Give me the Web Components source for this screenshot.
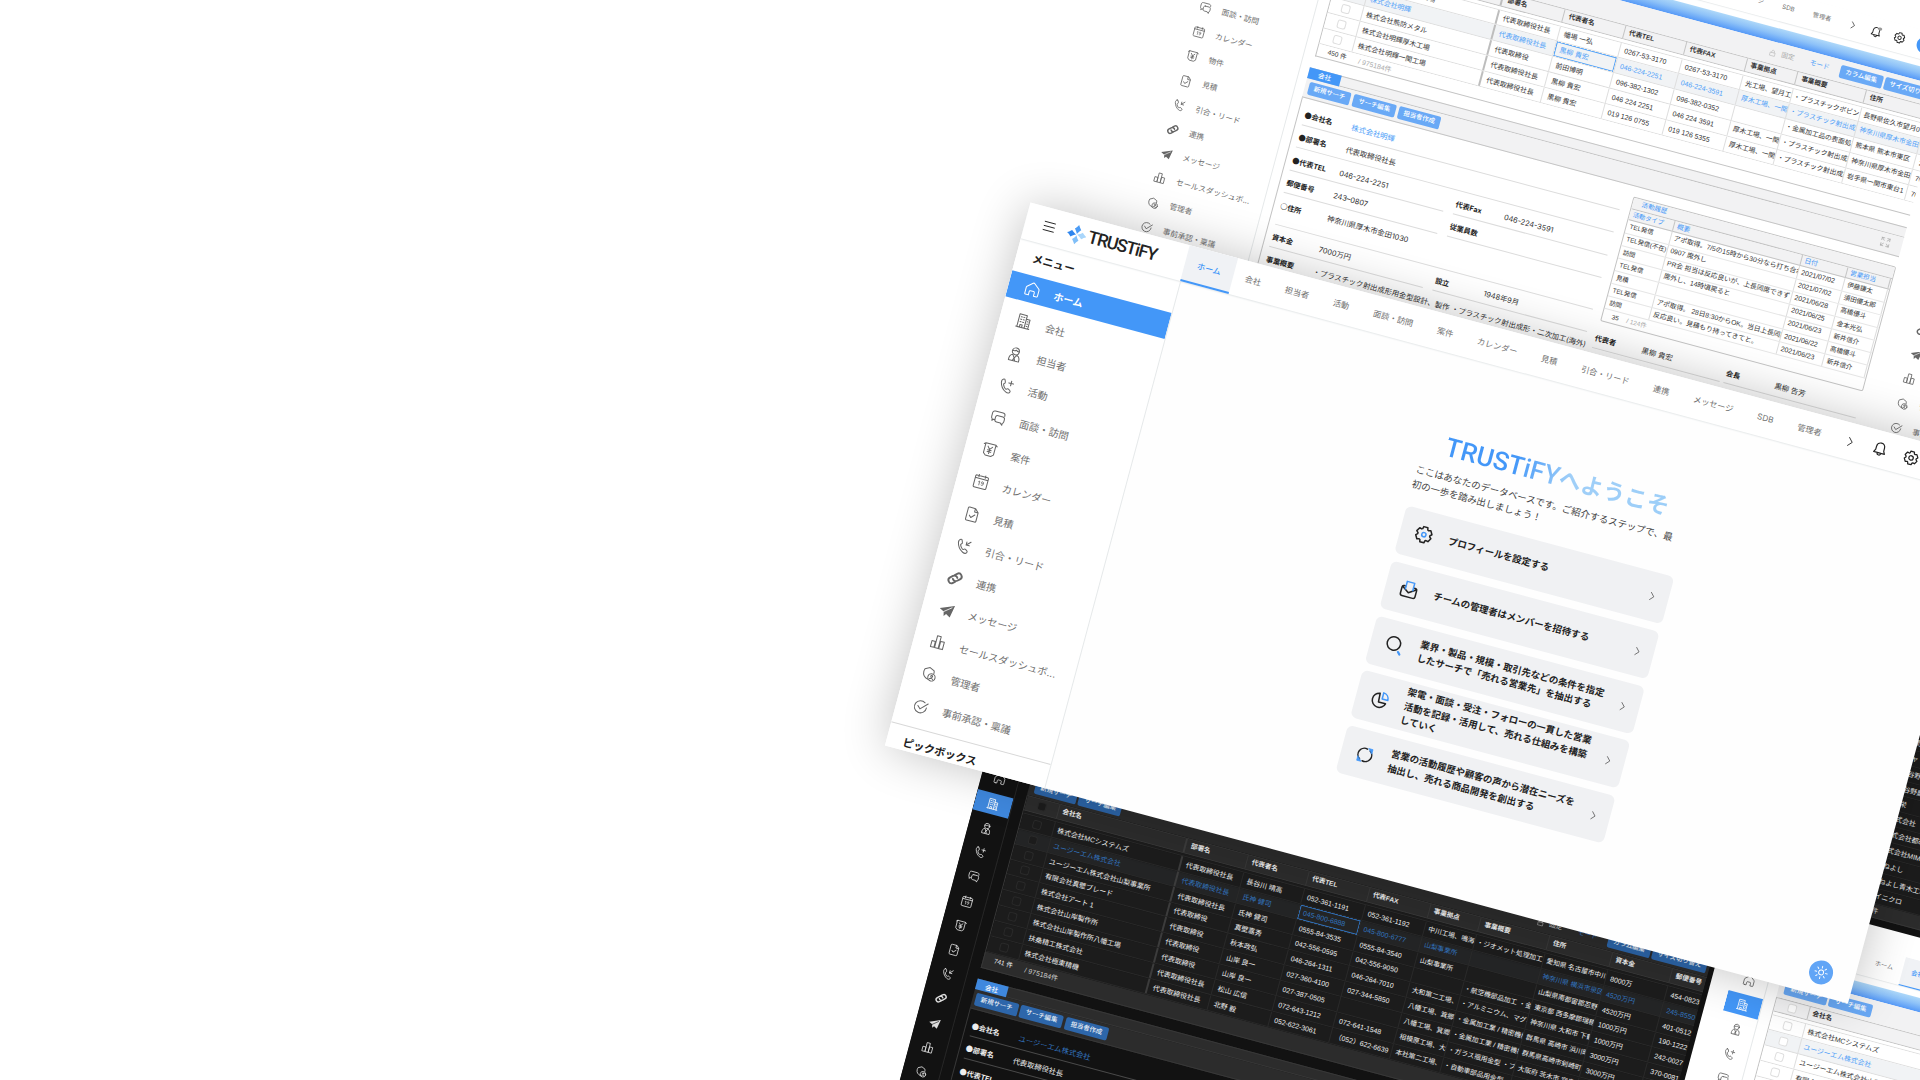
<!DOCTYPE html>
<html lang="ja">
<head>
<meta charset="utf-8">
<title>TRUSTiFY</title>
<style>
html,body{margin:0;padding:0;background:#fff}
body{width:1920px;height:1080px;overflow:hidden;position:relative;font-family:"Inter","Noto Sans CJK JP",sans-serif}
</style>
</head>
<body>
<tf-board></tf-board>
<script>
const s = n => `calc(var(--s) * ${n}px)`;
const define = (name, css, html) => {
  const make = el => {
    const t = document.createElement('template');
    t.innerHTML = `<style>*{box-sizing:border-box}${css}</style>${typeof html === 'function' ? html(el) : html}`;
    return t.content.cloneNode(true);
  };
  customElements.define(name, class extends HTMLElement {
    connectedCallback() {
      if (this.shadowRoot) return;
      this.attachShadow({ mode: 'open' }).append(make(this));
    }
  });
};

/* ---------- icons ---------- */
const gearPath = (cx, cy, ro, ri) => {
  let d = '';
  for (let k = 0; k < 6; k++) {
    [[-25, ri], [-15, ro], [15, ro], [25, ri]].forEach(([o, r], i) => {
      const a = (k * 60 + o - 90) * Math.PI / 180;
      d += `${k || i ? 'L' : 'M'}${(cx + r * Math.cos(a)).toFixed(2)} ${(cy + r * Math.sin(a)).toFixed(2)}`;
    });
  }
  return d + 'Z';
};
const handset = 'M3.2 1.3c-1.6.7-2 2.2-1.6 4.1.8 3.6 3.6 7.2 7 8.8 1.7.8 3.400.7 4.300-.7.5-.8.3-1.400-.4-1.900l-1.700-1.100c-.8-.5-1.400-.2-2 .5-.4.4-.9.4-1.400 0-1.300-1-2.300-2.300-2.900-3.800-.2-.5-.1-.9.4-1.200.8-.5 1.100-1.100.7-2l-.8-1.900c-.3-.8-.9-1.100-1.600-.8z';
const ICONS = {
  menu: '<path d="M1.500 2.800h13M1.500 8h13M1.500 13.200h13"/>',
  home: '<path d="M3 14.600H1.900a.9.9 0 0 1-.9-.9V7.200c0-.5.2-.9.500-1.200L7.100 1.300a1.400 1.400 0 0 1 1.800 0L14.500 6c.3.3.5.7.5 1.200v6.500a.9.900 0 0 1-.9.900h-3.300V10.800a1 1 0 0 0-1-1H6.200a1 1 0 0 0-1 1v3.800H3z"/>',
  building: '<path d="M.8 15h14.400M2 15V1.200h8V15M10 5h4v10M4.800 15v-2.800h2.400V15M4 3.800h1.200M6.800 3.800H8M4 6.500h1.200M6.800 6.500H8M4 9.200h1.200M6.800 9.200H8M11.700 7.500h.8M11.700 10h.8M11.700 12.500h.8"/>',
  person: '<circle cx="8" cy="4.800" r="3.700"/><path d="M4.400 4.600c2 .2 3.200-.3 4-1.200.7 1 1.800 1.300 3.200 1.200M2.500 15.200c-.3-3.500.8-5.800 3.200-6.500L8 12l2.300-3.300c2.400.7 3.500 3 3.200 6.500zM8 12l-1.200 3M8 12l1.200 3"/>',
  phoneplus: `<path d="${handset}"/><path d="M12 1.500v5M9.500 4h5"/>`,
  phonein: `<path d="${handset}"/><path d="M14.500 1.500 10.200 5.800M10.200 2.500v3.300h3.400"/>`,
  chat: '<path d="M5 10.500H3.800l-1.600 1.600v-1.900C1.400 9.700 1 9 1 8V4c0-1.500 1-2.500 2.500-2.500H12c1.500 0 2.500 1 2.500 2.500v.500"/><path d="M7.500 5.500h5.200c1.400 0 2.300.9 2.300 2.300v2.600c0 1-.4 1.700-1.200 2v2.100l-2-1.900H7.500c-1.400 0-2.300-.9-2.300-2.300V7.800c0-1.400.9-2.300 2.300-2.300z"/>',
  yen: '<path d="M2.500 1.500h11v10.800l-2.500 2.200H5L2.500 12.300zM.9 2.800l1.600-1.300M15.100 2.800l-1.600-1.300M5.500 4.500 8 7.500l2.500-3M8 7.500V12M6 8.300h4M6 10.200h4"/>',
  calendar: '<path d="M1 5V3.200C1 2.500 1.500 2 2.200 2h11.600c.7 0 1.200.5 1.200 1.200v10.600c0 .7-.5 1.200-1.200 1.200H2.200c-.7 0-1.200-.5-1.200-1.200zH15M4.500.8v2.400M11.500.8v2.400"/><path stroke-width=".8" d="M5.600 8.400l1-.8v4.200M9 11.400c1.600.8 2.200-.6 2-2.500-.1-.9-.6-1.300-1.200-1.300-.7 0-1.200.5-1.100 1.200.1 1.200 1.800 1.300 2.300.3"/>',
  doc: '<path d="M10 .9H3.600c-.8 0-1.300.5-1.300 1.300v11.600c0 .8.500 1.300 1.300 1.300h8.800c.8 0 1.300-.5 1.300-1.300V4.600zM9.800 1v3.700h3.800M5.300 9.300l2 2 3.600-3.600"/>',
  link: '<g stroke-width="2" transform="rotate(-42 8 8)"><path d="M6.600 11.300H3.800a3.300 3.300 0 0 1 0-6.600h3.400a3.300 3.300 0 0 1 3.200 4"/><path d="M9.400 4.700h2.800a3.300 3.300 0 0 1 0 6.600H8.800a3.300 3.300 0 0 1-3.200-4"/></g>',
  plane: '<path fill="currentColor" stroke="none" d="M15.600 1.200 13.200 14.600 8.600 12 6.500 14.700 5.400 10 .4 7.600z"/><path stroke="var(--win,#fff)" stroke-width=".8" d="M5.400 10.100 13 4"/>',
  bars: '<path d="M1.400 8h3.800v6.500H1.400zM5.900 1.500h4v13h-4zM10.600 6.500h4v8h-4z"/>',
  shield: '<path d="M8 13.800C4 13 1.500 10.500 1.500 6.800c0-1.200.2-2 .5-3L7 1.200l5 2.300c.4 1 .5 2 .5 3"/><circle cx="11" cy="11" r="3.900"/><circle cx="11" cy="9.900" r="1"/><path d="M9.200 13c.4-1.100 3.200-1.100 3.600 0"/>',
  check: '<path d="M14.300 7.500A6.500 6.500 0 1 1 11.500 2.600M4.800 7.300l3 3L15 3"/>',
  bell: '<path d="M8 1.200C5.300 1.200 3.600 3 3.600 5.800V9L2.100 11.900h11.800L12.400 9V5.800c0-2.800-1.700-4.600-4.400-4.600zM6 12c0 3 4 3 4 0"/>',
  gear: `<path d="${gearPath(8, 8, 7, 5.4)}"/><circle cx="8" cy="8" r="2.300"/>`,
  chev: '<path d="M5 1.500 11 8l-6 6.500"/>',
  expand: '<path d="M1.500 5.500v-4h4M1.500 1.500l4 4M10.500 1.500h4v4M14.500 1.500l-4 4M1.500 10.500v4h4M1.500 14.500l4-4M14.500 10.500v4h-4M14.500 14.500l-4-4"/>',
  lock: '<path d="M2.500 7.200h11v7.600h-11zM5 7V4.500a3 3 0 0 1 6 0V7"/>',
  sun: '<circle cx="8" cy="8" r="2.800"/><path d="M8 .8v2M8 13.200v2M.8 8h2M13.200 8h2M2.900 2.900l1.400 1.400M11.700 11.700l1.400 1.400M2.900 13.100l1.400-1.400M11.700 4.300l1.400-1.400"/>',
  setting: `<path d="${gearPath(8, 8, 7.2, 5.500)}"/><circle stroke="#4397f8" cx="8" cy="8" r="1.900"/>`,
  mail: '<path d="M4.200 5.500H3c-1 0-1.700.7-1.700 1.700v5.600c0 1.100.7 1.800 1.800 1.800h9.800c1.100 0 1.800-.7 1.800-1.800V7.200c0-1-.7-1.700-1.700-1.700h-1.200M1.800 6.500 8 10.800l6.200-4.300"/><path stroke="#4397f8" d="M4.600 8V1.200h6.800V8"/>',
  search: '<circle cx="7.300" cy="7" r="6"/><path stroke="#4397f8" stroke-width="2" d="m12.800 13.400 1.700 1.800"/>',
  pie: '<path d="M7 2.200a6.300 6.300 0 1 0 7 7.800H7.500z"/><path stroke="#4397f8" d="M10 1v5.600h5.200C15.200 3.500 13 1.200 10 1z"/>',
  refresh: '<path d="M4.300 12.600A5.700 5.700 0 0 1 9 2.400M11.700 3.400A5.700 5.700 0 0 1 7 13.600"/><path fill="#4397f8" stroke="#4397f8" stroke-width=".6" d="M10.200 1.600h3.600v3.800zM5.800 14.400H2.200v-3.800z"/>'
};
define('tf-icon', `:host{display:inline-flex;flex:none;width:1em;height:1em}svg{width:100%;height:100%;overflow:visible;fill:none;stroke:currentColor;stroke-width:var(--w,1.100);stroke-linecap:round;stroke-linejoin:round}`,
  el => `<svg viewBox="0 0 16 16">${ICONS[el.getAttribute('name')] || ''}</svg>`);

/* ---------- logo ---------- */
const petal = 'M0-10C1-8 2-7 3.300-5.500 2-4 .8-2.500 0-.6-.8-2.500-2-4-3.300-5.500-2-7-1-8 0-10z';
define('tf-logo', `
:host{display:flex;align-items:center;gap:${s(2.200)}}
svg{width:${s(20)};height:${s(20)};flex:none}
b{font:500 ${s(17.700)}/1 Roboto,sans-serif;letter-spacing:${s(-1.200)};color:var(--strong)}`,
`<svg viewBox="-10 -10 20 20"><path fill="#4b9cf6" d="${petal}"/><path fill="#2f86ee" transform="rotate(-90)" d="${petal}"/><path fill="#a9d6fb" transform="rotate(90)" d="${petal}"/><path fill="#80bff8" transform="rotate(180)" d="${petal}"/></svg><b>TRUSTiFY</b>`);

/* ---------- header ---------- */
const TABS = ['ホーム', '会社', '担当者', '活動', '面談・訪問', '案件', 'カレンダー', '見積', '引合・リード', '連携', 'メッセージ', 'SDB', '管理者'];
define('tf-header', `
:host{display:flex;height:${s(37.500)};background:var(--win);box-shadow:0 ${s(1)} ${s(1.500)} var(--hair);position:relative}
.brand{width:${s(165)};flex:none;display:flex;align-items:center;padding-left:${s(18)};gap:${s(11.500)};color:var(--strong)}
.brand tf-icon{font-size:${s(13)}}
.tab{display:flex;align-items:center;padding:0 ${s(12.500)};font-size:${s(8.250)};color:var(--text);white-space:nowrap;border-bottom:${s(2)} solid transparent;border-top:${s(1)} solid transparent;line-height:1}
.tab.on{background:var(--soft);color:#4397f8;border-bottom-color:#4397f8;font-weight:500}
.tools{margin-left:auto;display:flex;align-items:center;padding-right:${s(26)};color:var(--strong)}
.tools span{display:flex;justify-content:center;align-items:center;position:relative}
.tools span:nth-child(1){width:${s(30)};font-size:${s(10)};--w:1.300}
.tools span:nth-child(2){width:${s(31)};font-size:${s(15)};--w:1.300}
.tools span:nth-child(3){width:${s(34)};font-size:${s(15.500)};--w:1.300}
.tools span:nth-child(4){width:${s(37)}}
.ava{width:${s(23)};height:${s(23)};border-radius:50%;background:#4397f8}
:host([dot]) .tools span:nth-child(2)::after{content:"";position:absolute;right:${s(8)};top:0;width:${s(5)};height:${s(5)};border-radius:50%;background:#999}`,
el => `<div class="brand"><tf-icon name="menu"></tf-icon><tf-logo></tf-logo></div>
${TABS.map(t => `<div class="tab${t === el.getAttribute('active') ? ' on' : ''}">${t}</div>`).join('')}
<div class="tools"><span><tf-icon name="chev"></tf-icon></span><span><tf-icon name="bell"></tf-icon></span><span><tf-icon name="gear"></tf-icon></span><span><i class="ava"></i></span></div>`);

/* ---------- sidebar ---------- */
const MENU = [['home', 'ホーム'], ['building', '会社'], ['person', '担当者'], ['phoneplus', '活動'], ['chat', '面談・訪問'], ['yen', '案件'], ['calendar', 'カレンダー'], ['doc', '見積'], ['phonein', '引合・リード'], ['link', '連携'], ['plane', 'メッセージ'], ['bars', 'セールスダッシュボ...'], ['shield', '管理者'], ['check', '事前承認・稟議']];
const MENU2 = MENU.map((m, i) => i === 5 ? MENU[6] : i === 6 ? ['yen', '物件'] : m);
define('tf-menu-item', `
:host{display:flex;align-items:center;height:${s(27.600)};padding-left:${s(16.700)};gap:${s(15)};font-size:${s(10.150)};color:var(--text);white-space:nowrap;line-height:1}
:host([on]){background:var(--accent);color:#fff;font-weight:700}
tf-icon{font-size:${s(15)};color:var(--icon)}
:host([on]) tf-icon{color:#fff}`,
el => `<tf-icon name="${el.getAttribute('icon')}"></tf-icon><slot></slot>`);
define('tf-sidebar', `
:host{display:flex;flex-direction:column;width:${s(165.500)};border-right:${s(1)} solid var(--hair);flex:none;background:var(--side);overflow:hidden}
:host([mini]){width:${s(49.500)}}
h2{margin:0;height:${s(32.500)};display:flex;align-items:center;padding-left:${s(16.500)};font-size:${s(10.900)};font-weight:700;color:var(--strong);line-height:1;flex:none;white-space:nowrap}
:host([mini]) h2{visibility:hidden}
nav{display:flex;flex-direction:column;gap:${s(5.600)}}
footer{margin-top:${s(8)};border-top:1px solid var(--line);height:${s(25)};padding-top:${s(10.500)};padding-left:${s(16.500)};font-size:${s(10.900)};font-weight:700;color:var(--strong);line-height:1.200;white-space:nowrap}
:host([mini]) footer{display:none}`,
el => `<h2>${el.hasAttribute('mini') ? '' : 'メニュー'}</h2><nav>${(el.hasAttribute('alt') ? MENU2 : MENU).map((m, i) => `<tf-menu-item icon="${m[0]}"${i === +el.getAttribute('active') ? ' on' : ''}>${el.hasAttribute('mini') ? '' : m[1]}</tf-menu-item>`).join('')}</nav>${el.hasAttribute('mini') ? '' : '<footer>ピックボックス</footer>'}`);

/* ---------- window ---------- */
define('tf-window', `
:host{--s:.76;--win:#fff;--side:#fff;--soft:#f0f2f5;--hair:#e6e9ea;--line:#d8d8d8;--text:#707070;--icon:#666;--strong:#222;--accent:#4397f8;--panel:#f2f2f3;--row:#fff;--rowon:#f1f3f5;--ink:#333;--inkon:#4ea0f8;--btn:#69a9f6;--btnink:#fff;--muted:#aaa;--cell:#dedede;--split:#bdbdbd;--edge:#c4c4c4;--dline:#dcdcdc;
 display:flex;flex-direction:column;width:${s(997)};height:${s(562.500)};background:var(--win);overflow:hidden}
:host([theme=dark]){--win:#121212;--side:#121212;--soft:#222;--hair:#272727;--line:#333;--text:#ddd;--icon:#ddd;--strong:#eee;--accent:#3f88de;--panel:#2c2c2c;--row:#1c1c1c;--rowon:#232425;--ink:#eee;--inkon:#3273be;--btn:#2d66aa;--btnink:#e9eef5;--muted:#ccc;--cell:#2a2a2a;--split:#3c3c3c;--edge:#383838;--dline:#4a4a4a}
:host([main]){--s:1;position:relative;overflow:visible;box-shadow:0 0 48px rgba(0,0,0,.24);background:#fefefe}
.body{flex:1;display:flex;min-height:0}
.content{flex:1;min-width:0;overflow:hidden}`,
`<slot name="header"></slot><div class="body"><slot name="side"></slot><div class="content"><slot></slot></div></div>`);

/* ---------- welcome ---------- */
define('tf-card', `
:host{display:flex;align-items:center;height:49px;border-radius:6px;background:#f0f1f3;padding:0 12px 0 15.500px;color:#222;font-size:9.500px;font-weight:700;line-height:14.300px}
:host>tf-icon:first-of-type{font-size:18px;--w:1.350}
div{margin-left:16.300px;flex:1;white-space:nowrap}
tf-icon{font-size:18px;--w:1.500}
tf-icon.go{font-size:9px;--w:1.300;color:#555}`,
el => `<tf-icon name="${el.getAttribute('icon')}"></tf-icon><div><slot></slot></div><tf-icon class="go" name="chev"></tf-icon>`);
define('tf-welcome', `
:host{display:block;position:relative;height:525px}
.col{display:flex;flex-direction:column;width:277px;padding-top:75px;margin-left:276px}
h1{margin:0 0 0 23px;height:32px;font:500 26px/32px Roboto,"Noto Sans CJK JP",sans-serif;width:236px;white-space:nowrap;background:linear-gradient(97deg,#4397f8 30%,#a0cff8 54%,#9ccef8);-webkit-background-clip:text;background-clip:text;color:transparent}
h1 span{font-size:22.700px;font-weight:700}
p{margin:7px 0 15px;font-size:9.560px;line-height:14.300px;color:#444;white-space:nowrap}
.cards{display:flex;flex-direction:column;gap:7.800px}
.sun{position:absolute;left:785.500px;top:489.800px;width:24px;height:24px;border-radius:50%;background:#61a5f6;color:#fff;display:flex;align-items:center;justify-content:center;font-size:14px}`,
`<div class="col"><h1>TRUSTiFY<span>へようこそ</span></h1>
<p>ここはあなたのデータベースです。ご紹介するステップで、最<br>初の一歩を踏み出しましょう！</p>
<div class="cards">
<tf-card icon="setting">プロフィールを設定する</tf-card>
<tf-card icon="mail">チームの管理者はメンバーを招待する</tf-card>
<tf-card icon="search">業界・製品・規模・取引先などの条件を指定<br>したサーチで「売れる営業先」を抽出する</tf-card>
<tf-card icon="pie">架電・面談・受注・フォローの一貫した営業<br>活動を記録・活用して、売れる仕組みを構築<br>していく</tf-card>
<tf-card icon="refresh">営業の活動履歴や顧客の声から潜在ニーズを<br>抽出し、売れる商品開発を創出する</tf-card>
</div></div><div class="sun"><tf-icon name="sun"></tf-icon></div>`);

/* ---------- button ---------- */
define('tf-button', `:host{display:flex;align-items:center;justify-content:center;width:43.800px;height:13.400px;border-radius:2px;background:var(--btn);color:var(--btnink);font-size:6.500px;font-weight:500;line-height:1;white-space:nowrap;flex:none}:host([wide]){width:56px}`, '<slot></slot>');

/* ---------- list ---------- */
const HEAD = ['部署名', '代表者名', '代表TEL', '代表FAX', '事業拠点', '事業概要', '住所', '資本金', '郵便番号'];
const P = '代表取締役社長', Q = '代表取締役';
const LISTS = {
  meiki: { n: '450', cell: 1, foot: 13.600, rows: [
    ['株式会社光望月工場', P, '幡場 一弘', '0267-53-3170', '0267-53-3170', '光工場、望月工場', '・プラスチックボビン', '長野県佐久市望月0', ''],
    ['株式会社明輝', P, '黒柳 貴宏', '046-224-2251', '046-224-3591', '厚木工場、一関工場', '・プラスチック射出成形', '神奈川県厚木市金田', ''],
    ['株式会社熊防メタル', Q, '前田博明', '096-382-1302', '096-382-0352', '', '・金属加工品の表面処理', '熊本県 熊本市東区', '2'],
    ['株式会社明輝厚木工場', P, '黒柳 貴宏', '046 224 2251', '046 224 3591', '厚木工場、一関工場', '・プラスチック射出成形', '神奈川県厚木市金田', '70'],
    ['株式会社明輝一関工場', P, '黒柳 貴宏', '019 126 0755', '019 126 5355', '厚木工場、一関工場', '・プラスチック射出成形', '岩手県一関市東台1', '70']] },
  ugm: { n: '741', cell: 2, foot: 17, rows: [
    ['株式会社MCシステムズ', P, '長谷川 晴高', '052-361-1191', '052-361-1192', '中川工場、鳴海工場', '・ジオメット処理加工', '愛知県 名古屋市中川', '8000万', '454-0823'],
    ['ユージーエム株式会社', P, '氏神 健司', '045-800-6888', '045-800-6777', '山梨事業所', '', '神奈川県 横浜市泉区', '4520万円', '245-8550'],
    ['ユージーエム株式会社山梨事業所', P, '氏神 健司', '0555-84-3535', '0555-84-3540', '山梨事業所', '', '山梨県南都留郡忍野', '4520万円', '401-0512'],
    ['有限会社真壁ブレード', Q, '真壁嘉秀', '042-556-0595', '042-556-9050', '', '・航空機部品加工 ・金属', '東京都 西多摩郡瑞穂', '1000万円', '190-1222'],
    ['株式会社アート 1', Q, '秋本政弘', '046-264-1311', '046-264-7010', '大和第二工場、', '・アルミニウム、マグネ', '神奈川県 大和市 下鶴', '1000万円', '242-0027'],
    ['株式会社山岸製作所', Q, '山岸 良一', '027-360-4100', '027-344-5850', '八幡工場、箕郷工場', '・金属加工業 / 精密機械', '群馬県 高崎市 浜川町', '3000万円', '370-0081'],
    ['株式会社山岸製作所八幡工場', Q, '山岸 良一', '027-387-0505', '', '八幡工場、箕郷工場', '・金属加工業 / 精密機械', '群馬県高崎市剣崎町', '3000万円', '370-0081'],
    ['扶桑精工株式会社', P, '松山 広信', '072-643-1212', '072-641-1548', '相模原工場、大阪', '・ガラス瓶用金型 ・プラ', '大阪府 茨木市 宮島', '3000万円', '567-0851'],
    ['株式会社極東精機', P, '北野 毅', '052-622-3061', '（052）622-6639', '本社第二工場、', '・自動車部品用金型', '愛知県 名古屋市', '', '']] },
  names: { n: '', cell: -1, foot: 14, rows: ['', '', '', '', '', '', '', '', '', '小野', 'シャ', '渋谷野', '渋谷野農場', '共栄', '株式会社', '株式会社都改', '株式会社MIM', 'かねよし', 'かねよし青木工場', 'ケイニクロ'].map(n => [n]) }
};
define('tf-list', `
:host{display:block;font-family:"Liberation Sans","Noto Sans CJK JP",sans-serif;font-size:7px;line-height:1;color:var(--ink)}
.bar{height:13.500px;background:linear-gradient(#aed8f9,#8ec2f8 45%,#5599f7)}
:host([dark]) .bar{background:linear-gradient(#31689f,#24507f)}
.tools{height:22px;background:var(--panel);display:flex;align-items:center;gap:2px;padding:2px 3px 0 6px;font-size:6.800px;color:var(--inkon);white-space:nowrap}
.grow{flex:1}
.lock{color:var(--muted);display:flex;align-items:center;gap:5px;margin-right:14px}
.mode{margin-right:9px}
.r{display:flex;height:15.850px;background:var(--row);border-bottom:1px solid var(--cell)}
.r>*{flex:none;border-right:1px solid var(--cell);display:flex;align-items:center;padding-left:4.500px;white-space:pre;overflow:hidden}
.h{height:15.500px;background:var(--panel);font-weight:700;font-size:6.700px;border-color:var(--edge);border-top:1px solid var(--edge)}
.h>*{border-color:var(--edge)}
.sp{height:3.500px;background:var(--row);border-bottom:1px solid var(--cell)}
.on{background:var(--rowon);color:var(--inkon)}
.k{width:34.500px;justify-content:center;padding:0!important}
.k i{width:9px;height:9px;border:1px solid var(--cell);border-radius:2.500px;background:var(--row)}
.n{width:132px;padding-left:3.500px!important}
.r .n{border-right:2px solid var(--split)}
.c0{width:63px}.c1{width:62.600px}.c2{width:62.800px}.c3{width:63px}.c4{width:52.600px}.c5{width:70.800px}.c6{width:64.700px}.c7{width:62.500px}.c8{width:60px;border:0!important}
.r:not(.h) .c4,.r:not(.h) .c5,.r:not(.h) .c6{font-size:6.800px;padding-left:4px}
.r:not(.h) .c5{padding-left:1.500px}
.r:not(.h) .c6{padding-left:3px}
.sel{box-shadow:inset 0 0 0 1px var(--inkon)}
.panel{overflow:hidden;border-left:1px solid var(--edge)}
.foot{display:flex;align-items:center;padding-left:10.500px;font-size:6.600px;background:var(--foot,var(--row));border-bottom:1px solid var(--edge);border-left:1px solid var(--edge)}
:host([dark]) .foot{--foot:var(--panel)}
.foot span{width:32px}.foot em{font-style:normal;color:var(--muted);font-size:7px}
:host([names]) .n{padding-left:28px!important}`,
el => {
  const L = LISTS[el.getAttribute('data')], blank = el.hasAttribute('names');
  return `<div class="bar"></div><div class="tools"><tf-button>新規サーチ</tf-button><tf-button>サーチ編集</tf-button><span class="grow"></span><span class="lock"><tf-icon name="lock"></tf-icon>固定</span><span class="mode">モード</span><tf-button>カラム編集</tf-button><tf-button wide>サイズ切り替え</tf-button></div>
<div class="panel"><div class="r h"><span class="k"><i></i></span><span class="n">会社名</span>${HEAD.map((h, i) => `<span class="c${i}">${h}</span>`).join('')}</div><div class="sp"></div>
${L.rows.map((r, y) => `<div class="r${y === 1 && !blank ? ' on' : ''}"><span class="k"><i></i></span><span class="n">${r[0]}</span>${HEAD.map((h, i) => `<span class="c${i}${y === 1 && i === L.cell ? ' sel' : ''}">${r[i + 1] || ''}</span>`).join('')}</div>`).join('')}</div>
<div class="foot" style="height:${L.foot}px"><span>${L.n ? L.n + ' 件' : ''}</span><em>/ 975184件</em></div>`;
});

/* ---------- activity ---------- */
const ACT = [['TEL発信', 'アポ取得。7/5の15時から30分なら打ち合わせ', '2021/07/02', '伊藤謙太'], ['TEL発信(不在)', '0907 席外し', '2021/07/02', '須田優太郎'], ['訪問', 'PR会 担当は反応良いが、上長同席できず', '2021/06/28', '高橋優斗'], ['TEL発信', '席外し、14時頃戻ると', '2021/06/25', '金本光弘'], ['見積', '', '2021/06/23', '新井信介'], ['TEL発信', 'アポ取得。 28日8:30からOK。当日上長同席', '2021/06/22', '高橋優斗'], ['訪問', '反応良い。見積もり持ってきてと。', '2021/06/23', '新井信介']];
define('tf-activity', `
:host{display:block;border:1px solid var(--edge);border-radius:2px;font-family:"Liberation Sans","Noto Sans CJK JP",sans-serif;font-size:6.900px;line-height:1;color:var(--ink);background:var(--row);overflow:hidden}
.t{height:11.500px;background:var(--panel);color:#4397f8;display:flex;align-items:center;padding-left:9px;border-bottom:1px solid var(--edge);font-size:6.500px}
.r{display:flex;height:13.100px;border-bottom:1px solid #e6e6e6}
.r>*{display:flex;align-items:center;padding-left:3px;white-space:pre;overflow:hidden;border-right:1px solid #dcdcdc;flex:none}
.h{background:var(--panel);color:#4397f8;height:11.800px;border-color:var(--edge)}.h>*{border-color:var(--edge)}
.a{width:45.500px;font-size:6.350px}.b{width:132px;font-size:6.800px}.c{width:47.500px}.d{width:43.500px;font-size:6.600px}
.f{height:11.500px;display:flex;align-items:center;padding-left:9px;gap:8px;font-size:6.400px}.f em{font-style:normal;color:#aaa}`,
`<div class="t">活動履歴</div><div class="r h"><span class="a">活動タイプ</span><span class="b">概要</span><span class="c">日付</span><span class="d">営業担当</span></div>
${ACT.map(r => `<div class="r"><span class="a">${r[0]}</span><span class="b">${r[1]}</span><span class="c">${r[2]}</span><span class="d">${r[3]}</span></div>`).join('')}<div class="f">35<em>/ 124件</em></div>`);

/* ---------- detail ---------- */
define('tf-field', `
:host{display:flex;height:23.500px;padding-top:2.400px;line-height:22px;font-size:7.450px;border-bottom:1px solid var(--dline);flex:1;white-space:nowrap;color:var(--ink);min-width:0}
:host([tall]){height:32.400px}
b{width:48.500px;flex:none;font-size:7.200px;color:var(--strong)}
i{font-style:normal;font-family:"Noto Sans CJK JP",sans-serif;line-height:1}
:host([blue]) span{color:var(--inkon)}:host([wide]) b{width:50px}`,
el => `<b>${el.getAttribute('label').replace(/^[●○]/, '<i>$&</i>')}</b><span><slot></slot></span>`);
define('tf-detail', `
:host{display:block;margin-left:-1.500px}
:host([short]){margin-left:0}
.tabs{height:11.200px;background:var(--panel);border-bottom:1px solid var(--edge);border-top:1px solid var(--edge);display:flex}
.tabs b{width:32.700px;margin:-1px 0;background:var(--accent);color:#fff;font-size:6.600px;font-weight:500;display:flex;align-items:center;justify-content:center}
.tools{height:19.500px;background:var(--panel);border-bottom:1px solid var(--edge);display:flex;align-items:center;gap:2.700px;padding:0 12px 0 3.300px}
.tools tf-icon{margin-left:auto;font-size:10px;color:#aaa}
.body{display:flex;border-left:1px solid var(--edge);padding:3.700px 0 0 6px}
.l{width:329px;flex:none}.row{display:flex;gap:10px}.row tf-field{flex:1}.l .row tf-field:first-child{flex:none;width:159px}
.rt{width:272px;margin-left:10px;margin-top:7px}
.rt .row{margin-top:5px;gap:4px}.rt .row tf-field:first-child{flex:none;width:132px}
.rt .row{margin-left:-1px}`,
el => el.hasAttribute('short')
? `<div class="tabs"><b>会社</b></div><div class="tools"><tf-button>新規サーチ</tf-button><tf-button>サーチ編集</tf-button><tf-button>担当者作成</tf-button></div>
<div class="body"><div class="l"><tf-field label="●会社名" blue>ユージーエム株式会社</tf-field><tf-field label="●部署名">代表取締役社長</tf-field><tf-field label="●代表TEL">045-800-6888</tf-field></div></div>`
: `<div class="tabs"><b>会社</b></div><div class="tools"><tf-button>新規サーチ</tf-button><tf-button>サーチ編集</tf-button><tf-button>担当者作成</tf-button><tf-icon name="expand"></tf-icon></div>
<div class="body"><div class="l"><tf-field label="●会社名" blue>株式会社明輝</tf-field><tf-field label="●部署名">代表取締役社長</tf-field>
<div class="row"><tf-field label="●代表TEL">046-224-2251</tf-field><tf-field wide label="代表Fax">046-224-3591</tf-field></div>
<div class="row"><tf-field label="郵便番号">243–0807</tf-field><tf-field wide label="従業員数"></tf-field></div>
<tf-field tall label="○住所">神奈川県厚木市金田1030</tf-field>
<div class="row"><tf-field label="資本金">7000万円</tf-field><tf-field wide label="設立">1948年9月</tf-field></div>
<tf-field label="事業概要">・プラスチック射出成形用金型設計、製作 ・プラスチック射出成形・二次加工(海外)</tf-field></div>
<div class="rt"><tf-activity></tf-activity><div class="row"><tf-field label="代表者">黒柳 貴宏</tf-field><tf-field wide label="会長">黒柳 告芳</tf-field></div></div></div>`);

define('tf-records', `:host{display:flex;flex-direction:column;gap:11.500px;padding:7.500px 5px 0 11px}`, '<slot></slot>');

/* ---------- board ---------- */
define('tf-board', `
:host{position:absolute;left:1229.900px;top:-156px;transform:rotate(15deg);transform-origin:0 0;display:grid;grid-template:427.500px 427.500px 427.500px / 758px 758px;gap:22.500px 18px}
.c2{grid-column:2}.c1{grid-column:1}.r1{grid-row:1}.r2{grid-row:2}.r3{grid-row:3}
.c1.r3{margin:-.5px 0 0 1px}.c2.r3{margin-left:1.800px}
.front{position:absolute;left:-100px;top:397.900px}`,
`<tf-window class="c1 r1"><tf-header slot="header" dot active="会社"></tf-header><tf-sidebar slot="side" alt active="1"></tf-sidebar>
<tf-records><tf-list data="meiki"></tf-list><tf-detail></tf-detail></tf-records></tf-window>
<tf-window class="c2 r1"><tf-header slot="header" active="会社"></tf-header><tf-sidebar slot="side" alt active="1"></tf-sidebar></tf-window>
<tf-window class="c2 r2" theme="dark"><tf-header slot="header" active="会社"></tf-header><tf-sidebar slot="side" mini alt active="1"></tf-sidebar>
<tf-records><tf-list dark names data="names"></tf-list></tf-records></tf-window>
<tf-window class="c1 r3" theme="dark"><tf-header slot="header" active="会社"></tf-header><tf-sidebar slot="side" mini alt active="1"></tf-sidebar>
<tf-records><tf-list dark data="ugm"></tf-list><tf-detail short></tf-detail></tf-records></tf-window>
<tf-window class="c2 r3"><tf-header slot="header" active="会社"></tf-header><tf-sidebar slot="side" mini alt active="1"></tf-sidebar>
<tf-records><tf-list data="ugm"></tf-list></tf-records></tf-window>
<div class="front"><tf-window main><tf-header slot="header" active="ホーム"></tf-header><tf-sidebar slot="side" active="0"></tf-sidebar><tf-welcome></tf-welcome></tf-window></div>`);
</script>
</body>
</html>
